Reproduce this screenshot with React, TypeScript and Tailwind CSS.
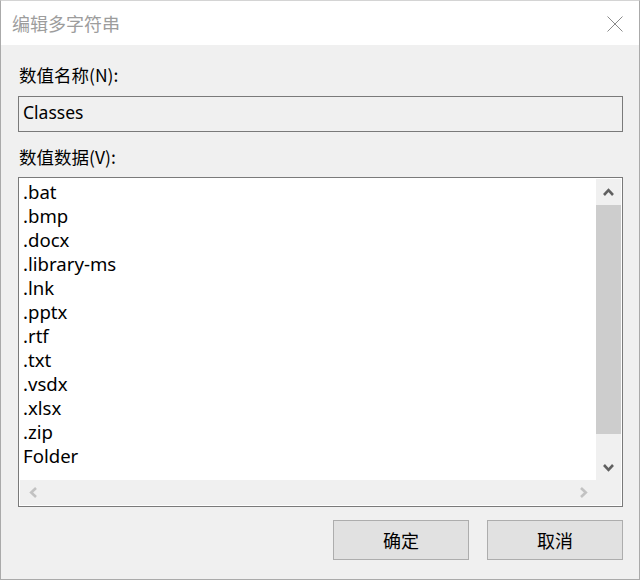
const items = ['.bat', '.bmp', '.docx', '.library-ms', '.lnk', '.pptx', '.rtf', '.txt', '.vsdx', '.xlsx', '.zip', 'Folder'];

const cjk = { fontFamily: '"Noto Sans CJK SC", "Noto Sans", sans-serif' };

function Chevron({ dir, color }: { dir: 'up' | 'down' | 'left' | 'right'; color: string }) {
  const vertical = dir === 'up' || dir === 'down';
  const points =
    dir === 'up' ? '1,7 5.5,2.2 10,7'
    : dir === 'down' ? '1,1 5.5,5.8 10,1'
    : dir === 'left' ? '7,1 2.2,5.5 7,10'
    : '1,1 5.8,5.5 1,10';
  return (
    <svg width={vertical ? 11 : 8} height={vertical ? 8 : 11} viewBox={vertical ? '0 0 11 8' : '0 0 8 11'}>
      <polyline points={points} fill="none" stroke={color} strokeWidth="2.6" />
    </svg>
  );
}

export default function App() {
  return (
    <div className="w-[640px] h-[580px] flex flex-col bg-[#f0f0f0] border border-[#aaaaaa] border-t-[#d4d4d4]">
      {/* Title bar */}
      <div className="h-[44px] shrink-0 bg-white flex items-center justify-between pl-[11px] pr-[16px]">
        <span className="text-[18px] text-[#9d9d9d] leading-none pb-[1px]" style={cjk}>编辑多字符串</span>
        <svg width="16" height="16" viewBox="0 0 16 16" className="mt-[1px]">
          <line x1="0.5" y1="0.5" x2="15.5" y2="15.5" stroke="#8a8a8a" strokeWidth="1" />
          <line x1="15.5" y1="0.5" x2="0.5" y2="15.5" stroke="#8a8a8a" strokeWidth="1" />
        </svg>
      </div>

      {/* Body */}
      <div className="flex flex-col pl-[17px] pr-[16px] pt-[18px]" style={cjk}>
        <div className="h-[24px] leading-[24px] text-[17.5px] text-black pl-[1px]">数值名称(N):</div>
        <div className="mt-[9px] h-[36px] border border-[#7a7a7a] bg-[#f0f0f0] flex items-center pl-[4px] pb-[3px]">
          <span className="text-[17.5px] text-black" style={{ fontFamily: '"Noto Sans", sans-serif' }}>Classes</span>
        </div>

        <div className="mt-[13px] h-[24px] leading-[24px] text-[17.5px] text-black pl-[1px]">数值数据(V):</div>

        {/* Multi-line list */}
        <div className="mt-[8px] h-[330px] border border-[#7a7a7a] bg-white p-px flex flex-col">
          <div className="flex-1 flex min-h-0">
            <div className="flex-1 pl-[3px] pt-px" style={{ fontFamily: '"Noto Sans", sans-serif' }}>
              {items.map((it) => (
                <div key={it} className="h-[24px] leading-[24px] text-[18.6px] text-black">{it}</div>
              ))}
            </div>
            <div className="w-[25px] flex flex-col bg-[#f0f0f0]">
              <div className="h-[25px] flex items-center justify-center">
                <Chevron dir="up" color="#606060" />
              </div>
              <div className="flex-1 pt-px">
                <div className="h-[229px] bg-[#cdcdcd]" />
              </div>
              <div className="h-[25px] flex items-center justify-center">
                <Chevron dir="down" color="#606060" />
              </div>
            </div>
          </div>
          <div className="h-[25px] flex">
            <div className="flex-1 flex items-center justify-between bg-[#f0f0f0]">
              <div className="w-[25px] flex items-center justify-center">
                <Chevron dir="left" color="#c2c2c2" />
              </div>
              <div className="w-[25px] flex items-center justify-center">
                <Chevron dir="right" color="#c2c2c2" />
              </div>
            </div>
            <div className="w-[25px] bg-[#f0f0f0]" />
          </div>
        </div>

        {/* Buttons */}
        <div className="mt-[13px] flex justify-end gap-[18px]">
          <button className="w-[136px] h-[40px] bg-[#e1e1e1] border border-[#adadad] text-[18px] text-black flex items-center justify-center">确定</button>
          <button className="w-[136px] h-[40px] bg-[#e1e1e1] border border-[#adadad] text-[18px] text-black flex items-center justify-center">取消</button>
        </div>
      </div>
    </div>
  );
}
